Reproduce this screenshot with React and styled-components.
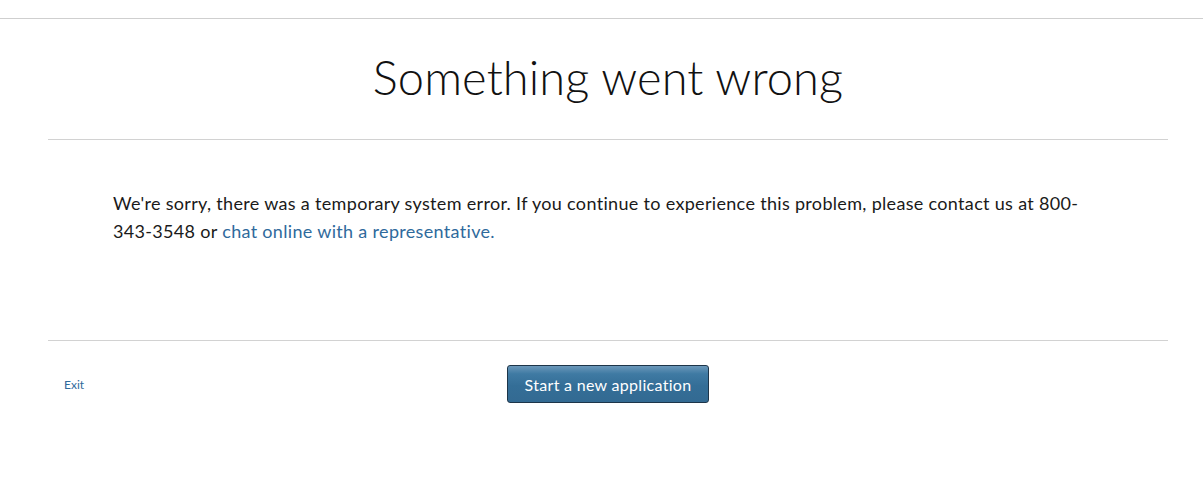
import React from "react";
import styled, { createGlobalStyle } from "styled-components";

const Global = createGlobalStyle`
  html, body { margin: 0; padding: 0; background: #fff; }
  body { font-family: Lato, "Open Sans", sans-serif; color: #111; }
`;

const Page = styled.div`
  width: 100%;
`;

const TopBar = styled.div`
  height: 18px;
  border-bottom: 1px solid #cfcfcf;
`;

const Frame = styled.div`
  margin: 0 35px 0 48px;
`;

const Header = styled.header`
  height: 120px;
  border-bottom: 1px solid #d2d2d2;
  display: flex;
  align-items: center;
  justify-content: center;
`;

const Title = styled.h1`
  margin: 0;
  font-size: 47px;
  font-weight: 300;
  color: #111;
  letter-spacing: 0.1px;
  padding-bottom: 4px;
`;

const Body = styled.section`
  height: 201px;
  border-bottom: 1px solid #d2d2d2;
  padding: 49px 65px 0;
  box-sizing: border-box;
`;

const Message = styled.p`
  margin: 0;
  font-size: 18px;
  line-height: 28px;
  letter-spacing: 0.32px;
  color: #1a1a1a;
  max-width: 990px;
`;

const Link = styled.a`
  color: #2f6a9c;
  text-decoration: none;
`;

const Footer = styled.footer`
  display: grid;
  grid-template-columns: 1fr auto 1fr;
  align-items: center;
  padding-top: 24px;
`;

const ExitLink = styled.a`
  justify-self: start;
  margin-left: 16px;
  font-size: 12px;
  color: #2f6a9c;
  text-decoration: none;
`;

const PrimaryButton = styled.button`
  width: 202px;
  height: 38px;
  border: 1px solid #1d3549;
  border-radius: 3px;
  background: linear-gradient(to bottom, #6b98ba 0%, #3f7aa3 22%, #346e97 55%, #336a92 100%);
  color: #fff;
  font-family: Lato, "Open Sans", sans-serif;
  font-size: 16px;
  letter-spacing: 0.3px;
  padding: 0;
  cursor: pointer;
`;

export default function App() {
  return (
    <Page>
      <Global />
      <TopBar />
      <Frame>
        <Header>
          <Title>Something went wrong</Title>
        </Header>
        <Body>
          <Message>
            We're sorry, there was a temporary system error. If you continue to experience this problem, please contact us at 800-343-3548 or{" "}
            <Link href="#">chat online with a representative.</Link>
          </Message>
        </Body>
        <Footer>
          <ExitLink href="#">Exit</ExitLink>
          <PrimaryButton>Start a new application</PrimaryButton>
          <span />
        </Footer>
      </Frame>
    </Page>
  );
}
